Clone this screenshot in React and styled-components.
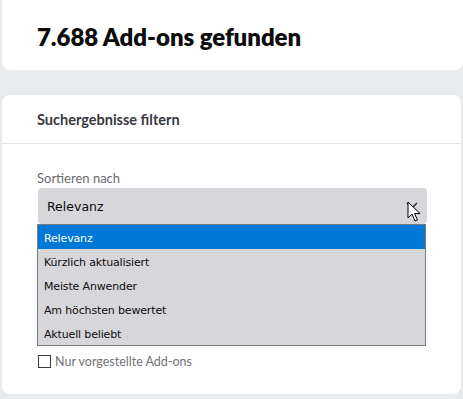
import React from "react";
import styled, { createGlobalStyle } from "styled-components";

const Global = createGlobalStyle`
  html, body { margin: 0; padding: 0; }
  body {
    background: #e8ebee;
    font-family: "Open Sans", "Noto Sans", sans-serif;
    width: 463px;
    height: 399px;
    overflow: hidden;
  }
`;

const Page = styled.div`
  display: flex;
  flex-direction: column;
  gap: 25px;
  padding: 0 2px 0 2px;
`;

const Card = styled.section`
  background: #fff;
  border-radius: 8px;
`;

const TitleCard = styled(Card)`
  height: 70px;
  display: flex;
  align-items: center;
  padding: 0 35px;
  border-radius: 0 0 8px 8px;
  margin-right: -2px;
`;

const Title = styled.h1`
  margin: 0;
  margin-top: 2px;
  font-family: "Lato", sans-serif;
  font-weight: 800;
  font-size: 24px;
  color: #0c0c0d;
  letter-spacing: -0.05px;
`;

const FilterCard = styled(Card)`
  height: 299px;
  display: flex;
  flex-direction: column;
`;

const CardHeader = styled.header`
  height: 48px;
  display: flex;
  align-items: center;
  padding: 0 35px;
  border-bottom: 1px solid #e4e4e8;
  font-family: "Lato", sans-serif;
  font-weight: 700;
  font-size: 14.5px;
  color: #38383d;
`;

const CardBody = styled.div`
  padding: 26px 35px 0 35px;
  display: flex;
  flex-direction: column;
`;

const Label = styled.label`
  font-family: "Lato", sans-serif;
  font-size: 13px;
  color: #6a6a70;
  line-height: 16px;
  margin-bottom: 2px;
`;

const SelectWrap = styled.div`
  position: relative;
  width: 389px;
  margin-left: 1px;
`;

const SelectBox = styled.div`
  height: 36px;
  border-radius: 4px;
  background: #d7d7db;
  display: flex;
  align-items: center;
  justify-content: space-between;
  padding: 0 8px 0 9px;
  font-family: "DejaVu Sans", Verdana, sans-serif;
  font-size: 12.5px;
  color: #0c0c0d;
`;

const Chevron = styled.svg`
  width: 14px;
  height: 14px;
  margin-top: 0px;
`;

const Cursor = styled.svg`
  position: absolute;
  left: 369px;
  top: 13px;
  width: 14px;
  height: 22px;
`;

const OptionList = styled.ul`
  position: absolute;
  left: -1px;
  top: 36px;
  width: 387px;
  margin: 0;
  padding: 0;
  list-style: none;
  background: #d7d7db;
  border: 1px solid #7a7a7e;
  z-index: 2;
`;

const Option = styled.li`
  height: 24px;
  box-sizing: border-box;
  padding: 2px 6px 0 6px;
  display: flex;
  align-items: center;
  font-family: "DejaVu Sans", Verdana, sans-serif;
  font-size: 11px;
  letter-spacing: -0.15px;
  background: ${(p) => (p.$selected ? "#0078d7" : "transparent")};
  color: ${(p) => (p.$selected ? "#ffffff" : "#0c0c0d")};
`;

const Spacer = styled.div`
  height: 130px;
`;

const CheckRow = styled.label`
  display: flex;
  align-items: center;
  gap: 4px;
  margin-left: 1px;
  font-family: "Lato", sans-serif;
  font-size: 12.5px;
  color: #737378;
`;

const Box = styled.span`
  width: 11px;
  height: 11px;
  border: 1px solid #3a3a3e;
  background: #fff;
`;

const options = [
  "Relevanz",
  "Kürzlich aktualisiert",
  "Meiste Anwender",
  "Am höchsten bewertet",
  "Aktuell beliebt",
];

export default function App() {
  return (
    <>
      <Global />
      <Page>
        <TitleCard>
          <Title>7.688 Add-ons gefunden</Title>
        </TitleCard>
        <FilterCard>
          <CardHeader>Suchergebnisse filtern</CardHeader>
          <CardBody>
            <Label>Sortieren nach</Label>
            <SelectWrap>
              <SelectBox>
                <span>Relevanz</span>
                <Chevron viewBox="0 0 14 14">
                  <path d="M2 4 L7 9 L12 4" fill="none" stroke="#3a3a3e" strokeWidth="1.6" />
                </Chevron>
              </SelectBox>
              <Cursor viewBox="0 0 14 22">
                <path
                  d="M1 1 L1 17 L5 13 L8 20 L10.5 19 L7.5 12.5 L13 12.5 Z"
                  fill="#fff"
                  stroke="#000"
                  strokeWidth="1"
                  strokeLinejoin="round"
                />
              </Cursor>
              <OptionList>
                {options.map((o, i) => (
                  <Option key={o} $selected={i === 0}>
                    {o}
                  </Option>
                ))}
              </OptionList>
            </SelectWrap>
            <Spacer />
            <CheckRow>
              <Box />
              Nur vorgestellte Add-ons
            </CheckRow>
          </CardBody>
        </FilterCard>
      </Page>
    </>
  );
}
